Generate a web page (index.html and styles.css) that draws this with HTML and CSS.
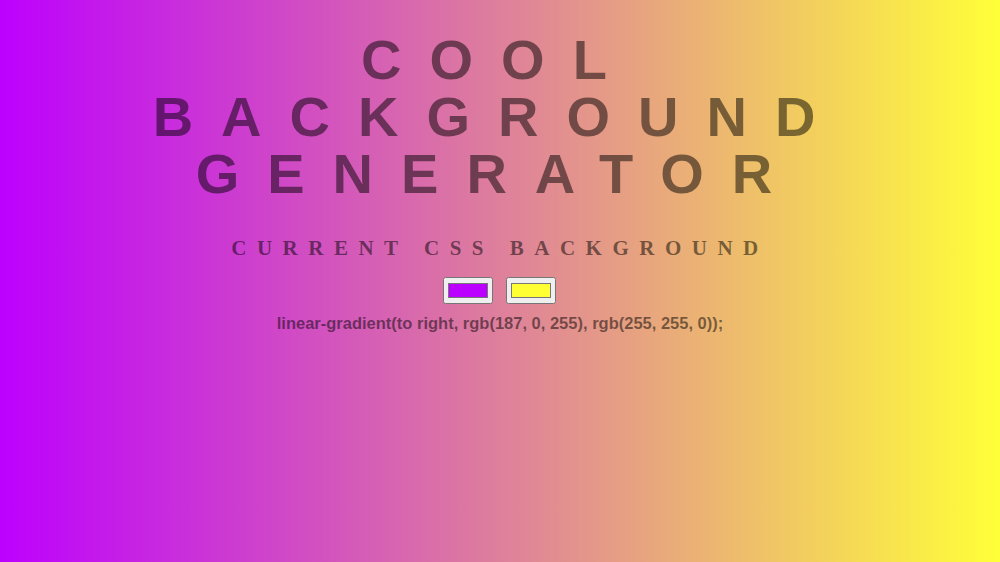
FILE: index.html
```html
<!DOCTYPE html>
<html lang="en">
<head>
<meta charset="utf-8">
<title>Background Generator</title>
<link rel="stylesheet" href="styles.css">
</head>
<body class="page">
  <h1 class="title">Cool Background Generator</h1>
  <h3 class="subtitle">Current CSS Background</h3>
  <div class="pickers">
    <input type="color" class="picker" value="#bc00ff">
    <input type="color" class="picker" value="#ffff33">
  </div>
  <p class="css-out">linear-gradient(to right, rgb(187, 0, 255), rgb(255, 255, 0));</p>
</body>
</html>
```

FILE: styles.css
```css
html, body {
  margin: 0;
  padding: 0;
}

.page {
  min-height: 100vh;
  box-sizing: border-box;
  padding-top: 31px;
  background: linear-gradient(to right, rgb(189, 0, 255), rgb(255, 255, 56));
  text-align: center;
  color: rgba(0, 0, 0, 0.5);
}

.title {
  margin: 0 auto;
  width: 720px;
  font: 700 56px/57px "Liberation Sans", Arial, sans-serif;
  letter-spacing: 0.5em;
  text-transform: uppercase;
  transform: translateX(-2px);
}

.subtitle {
  margin: 34px 0 0;
  font: 700 21px/24px "Liberation Serif", "Times New Roman", serif;
  letter-spacing: 0.5em;
  text-transform: uppercase;
}

.pickers {
  margin-top: 17px;
  display: flex;
  justify-content: center;
  gap: 13px;
  transform: translateX(-1px);
}

.picker {
  margin: 0;
  width: 50px;
  height: 27px;
}

.css-out {
  margin: 10px 0 0;
  font: 700 16.5px/18px "Liberation Sans", Arial, sans-serif;
}
```
